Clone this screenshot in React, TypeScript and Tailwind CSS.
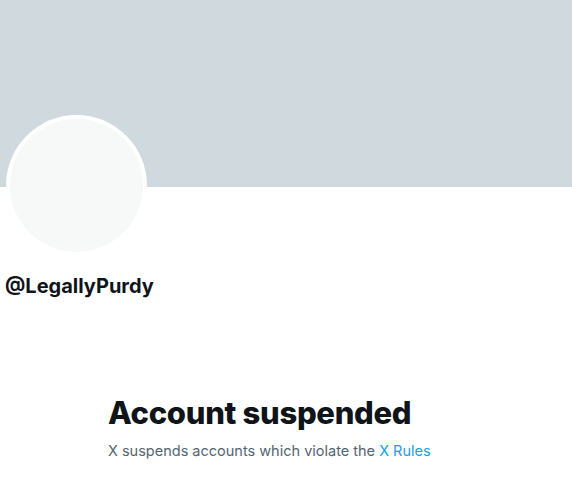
export default function App() {
  return (
    <div
      className="w-[572px] min-h-[495px] bg-white"
      style={{ fontFamily: 'Inter, Roboto, "Liberation Sans", sans-serif' }}
    >
      {/* banner */}
      <div className="h-[187px] bg-[#cfd9de]" />

      {/* avatar + handle */}
      <div className="px-[6px]">
        <div className="-mt-[72px] w-[141px] h-[141px] rounded-full bg-white p-[4px]">
          <div className="w-full h-full rounded-full bg-[#f7f9f9]" />
        </div>
        <div className="mt-[18px] text-[20px] font-bold leading-6 text-[#0f1419] -ml-[1px]">
          @LegallyPurdy
        </div>
      </div>

      {/* empty state */}
      <div className="mx-auto max-w-[356px] mt-[97px]">
        <h2 className="text-[31px] font-extrabold leading-9 text-[#0f1419] tracking-[-0.3px]">
          Account suspended
        </h2>
        <p className="mt-[10px] text-[14.5px] leading-5 text-[#536471]">
          X suspends accounts which violate the{" "}
          <span className="text-[#1d9bf0]">X Rules</span>
        </p>
      </div>
    </div>
  );
}
